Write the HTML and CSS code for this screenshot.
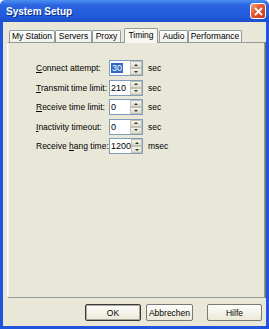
FILE: index.html
```html
<!DOCTYPE html>
<html lang="en">
<head>
    <meta charset="UTF-8">
    <title>System Setup</title>
    <link rel="stylesheet" href="styles.css">
</head>
<body>
    <div class="window">
        <div class="titlebar">
            <span class="title">System Setup</span>
            <span class="close">
                <svg width="9" height="9" viewBox="0 0 9 9"><path d="M1 1 L8 8 M8 1 L1 8" stroke="#fff" stroke-width="1.8"/></svg>
            </span>
        </div>
        <div class="frame">
            <div class="tabs">
                <div class="tab t-station">My Station</div>
                <div class="tab t-servers">Servers</div>
                <div class="tab t-proxy">Proxy</div>
                <div class="tab active t-timing">Timing</div>
                <div class="tab t-audio">Audio</div>
                <div class="tab t-perf">Performance</div>
            </div>
            <div class="panel">
                <div class="fields">
                    <label><u>C</u>onnect attempt:</label>
                    <div class="spin"><span class="val"><span class="sel">30</span></span><span class="arrows"><i class="up"></i><i class="down"></i></span></div>
                    <span class="unit">sec</span>

                    <label><u>T</u>ransmit time limit:</label>
                    <div class="spin"><span class="val">210</span><span class="arrows"><i class="up"></i><i class="down"></i></span></div>
                    <span class="unit">sec</span>

                    <label><u>R</u>eceive time limit:</label>
                    <div class="spin"><span class="val">0</span><span class="arrows"><i class="up"></i><i class="down"></i></span></div>
                    <span class="unit">sec</span>

                    <label><u>I</u>nactivity timeout:</label>
                    <div class="spin"><span class="val">0</span><span class="arrows"><i class="up"></i><i class="down"></i></span></div>
                    <span class="unit">sec</span>

                    <label>Receive <u>h</u>ang time:</label>
                    <div class="spin"><span class="val">1200</span><span class="arrows"><i class="up"></i><i class="down"></i></span></div>
                    <span class="unit">msec</span>
                </div>
            </div>
            <div class="buttons">
                <button class="btn default b-ok">OK</button>
                <button class="btn b-cancel">Abbrechen</button>
                <button class="btn b-help">Hilfe</button>
            </div>
        </div>
    </div>
</body>
</html>
```

FILE: styles.css
```css
html, body {
    margin: 0;
    padding: 0;
}

body {
    font-family: "Liberation Sans", Arial, sans-serif;
    font-size: 8.5px;
    color: #000;
}

.window {
    width: 269px;
    height: 329px;
    display: flex;
    flex-direction: column;
}

.titlebar {
    height: 22px;
    flex: none;
    display: flex;
    align-items: center;
    justify-content: space-between;
    padding: 0 3px 0 6px;
    background: linear-gradient(#4a8ef2, #2a64e0 25%, #2159dc 75%, #1c4fc8);
    border-radius: 5px 5px 0 0;
}

.title {
    color: #fff;
    font-weight: bold;
    font-size: 10px;
    text-shadow: 1px 1px 0 #0c2f8c;
}

.close {
    width: 14px;
    height: 14px;
    display: flex;
    align-items: center;
    justify-content: center;
    background: linear-gradient(135deg, #f0a080, #e0502c 50%, #c8381a);
    border: 1px solid #fff;
    border-radius: 3px;
}

.frame {
    flex: 1;
    display: flex;
    flex-direction: column;
    background: #e9e8d8;
    border: 3px solid #1f55dc;
    border-top: none;
    padding: 6px 1px 5px 4px;
}

.tabs {
    display: flex;
    align-items: flex-end;
    height: 14px;
    padding-left: 2px;
    position: relative;
    z-index: 1;
}

.tab {
    height: 12px;
    line-height: 11px;
    box-sizing: border-box;
    text-align: center;
    background: linear-gradient(#fefefe, #f2f1ea);
    border: 1px solid #919b9c;
    border-bottom: none;
    border-radius: 2px 2px 0 0;
}

.tab.active {
    height: 15px;
    line-height: 13px;
    background: #f7f6f0;
    margin: 0 1px -1px 3px;
}

.t-station { width: 46px; }
.t-servers { width: 37px; }
.t-proxy { width: 29px; }
.t-timing { width: 34px; }
.t-audio { width: 29px; }
.t-perf { width: 54px; }

.panel {
    height: 256px;
    box-sizing: border-box;
    background: #e9e8d8;
    border: 1px solid #919b9c;
    border-left-color: #fff;
    box-shadow: inset 1px 0 0 #f6f5ef, 1px 0 0 #716f64;
    padding: 17px 0 0 28px;
}

.fields {
    display: grid;
    grid-template-columns: 73px 34px auto;
    grid-auto-rows: 16px;
    row-gap: 3.5px;
    align-items: center;
}

.spin {
    height: 16px;
    box-sizing: border-box;
    display: flex;
    background: #fff;
    border: 1px solid #7f9db9;
}

.val {
    flex: 1;
    padding-left: 1px;
    line-height: 14px;
    font-size: 9px;
}

.sel {
    background: #316ac5;
    color: #fff;
    padding: 0 1px;
}

.arrows {
    width: 12px;
    display: flex;
    flex-direction: column;
}

.arrows i {
    flex: 1;
    position: relative;
    background: linear-gradient(#f4f3ee, #dedbcc);
    border: 1px solid #c4c2b4;
    box-sizing: border-box;
}

.arrows i::after {
    content: "";
    position: absolute;
    left: 3px;
    top: 1.5px;
    width: 0;
    height: 0;
    border-left: 2.5px solid transparent;
    border-right: 2.5px solid transparent;
}

.arrows .up::after {
    border-bottom: 2.5px solid #333;
}

.arrows .down::after {
    border-top: 2.5px solid #333;
}

.unit {
    padding-left: 5px;
}

.buttons {
    display: flex;
    justify-content: flex-end;
    margin-top: auto;
    padding-right: 3px;
}

.btn {
    height: 17px;
    padding: 0;
    font-family: inherit;
    font-size: 8.5px;
    background: linear-gradient(#fdfdfb, #ece9d8);
    border: 1px solid #7a7a72;
    border-radius: 2px;
    color: #000;
}

.btn.default {
    border: 1px solid #3a3a3a;
    box-shadow: inset 0 0 0 1px #a8a8a0;
}

.b-ok { width: 56px; margin-right: 5px; }
.b-cancel { width: 47px; margin-right: 14px; }
.b-help { width: 55px; }
```
